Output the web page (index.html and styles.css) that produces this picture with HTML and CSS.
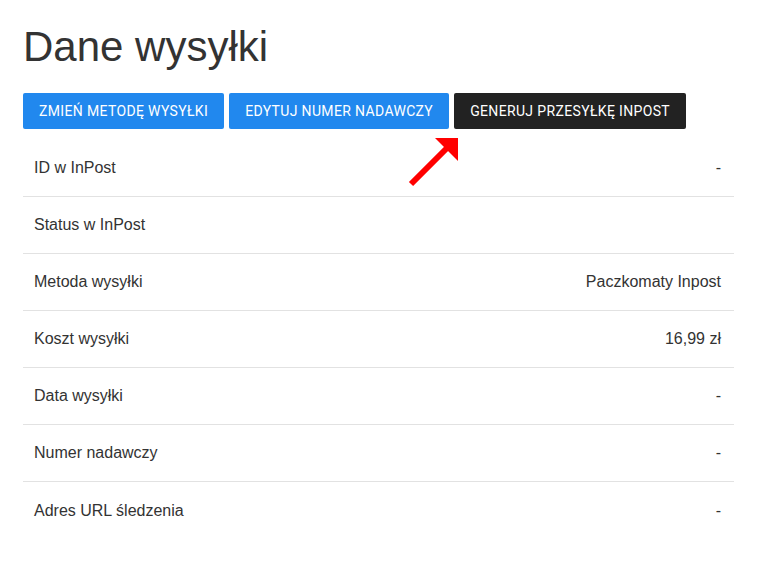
FILE: index.html
```html
<!DOCTYPE html>
<html lang="pl">
<head>
  <meta charset="UTF-8">
  <meta name="viewport" content="width=device-width, initial-scale=1.0">
  <title>Dane wysyłki</title>
  <link rel="stylesheet" href="styles.css">
</head>
<body>
  <div class="shipping">
    <h1 class="shipping-title">Dane wysyłki</h1>
    <div class="shipping-actions">
      <a class="btn btn-blue" href="#">Zmień metodę wysyłki</a>
      <a class="btn btn-blue" href="#">Edytuj numer nadawczy</a>
      <div class="btn-wrap">
        <a class="btn btn-dark" href="#">Generuj przesyłkę InPost</a>
        <!-- strzałka wskazująca przycisk InPost -->
        <svg class="hint-arrow" width="52" height="52" viewBox="0 0 52 52">
          <path d="M3 47 L41 9" stroke="#ff0000" stroke-width="6" fill="none"/>
          <polygon points="27,1 50,1 50,24" fill="#ff0000"/>
        </svg>
      </div>
    </div>
    <ul class="shipping-list">
      <li><span>ID w InPost</span><span>-</span></li>
      <li><span>Status w InPost</span><span></span></li>
      <li><span>Metoda wysyłki</span><span>Paczkomaty Inpost</span></li>
      <li><span>Koszt wysyłki</span><span>16,99 zł</span></li>
      <li><span>Data wysyłki</span><span>-</span></li>
      <li><span>Numer nadawczy</span><span>-</span></li>
      <li><span>Adres URL śledzenia</span><span>-</span></li>
    </ul>
  </div>
</body>
</html>
```

FILE: styles.css
```css
*{
  margin: 0;
  padding: 0;
  box-sizing: border-box;
}

body{
  background: #fff;
  color: #333;
  font-family: "Liberation Sans", Arial, sans-serif;
}

.shipping{
  width: 711px;
  margin-left: 23px;
  padding-top: 24px;
}

.shipping-title{
  font-size: 42px;
  font-weight: 400;
  line-height: 46px;
  color: #333;
  margin-bottom: 23px;
}

.shipping-actions{
  display: flex;
  gap: 5px;
  margin-bottom: 11px;
}

.btn-wrap{
  position: relative;
}

.btn{
  display: block;
  height: 36px;
  line-height: 36px;
  padding: 0 16px;
  border-radius: 2px;
  font-family: Roboto, "Liberation Sans", sans-serif;
  font-size: 14px;
  letter-spacing: 0.35px;
  text-transform: uppercase;
  text-decoration: none;
  color: #fff;
}

.btn-blue{
  background: #2188ee;
}

.btn-dark{
  background: #222;
}

.hint-arrow{
  position: absolute;
  left: -46px;
  top: 44px;
}

.shipping-list{
  list-style: none;
}

.shipping-list li{
  display: flex;
  justify-content: space-between;
  height: 57px;
  align-items: center;
  padding: 0 13px 0 11px;
  font-size: 16px;
  color: #333;
  border-bottom: 1px solid #e2e2e2;
}

.shipping-list li:last-child{
  border-bottom: none;
}
```
